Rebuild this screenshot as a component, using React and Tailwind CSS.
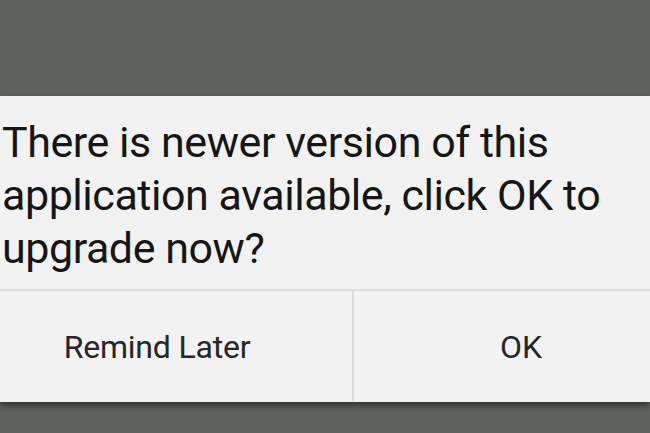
export default function App() {
  return (
    <div className="w-[650px] h-[433px] overflow-hidden bg-[#5e615d] pt-[96px]" style={{ fontFamily: 'Roboto, "Liberation Sans", sans-serif' }}>
      <div className="bg-[#f2f2f2] shadow-[0_4px_6px_rgba(0,0,0,0.45)]">
        <p className="pl-[2px] pr-4 pt-[20px] pb-[14px] text-[43px] leading-[53px] text-[#161616] tracking-[-0.45px]">
          There is newer version of this application available, click OK to upgrade now?
        </p>
        <div className="flex h-[113px] border-t-2 border-[#dedede]">
          <button className="w-[354px] pr-[38px] border-r-2 border-[#dcdcdc] text-[32px] tracking-[-0.2px] text-[#262626]">
            Remind Later
          </button>
          <button className="flex-1 pl-[38px] text-[32px] text-[#262626]">OK</button>
        </div>
      </div>
    </div>
  );
}
